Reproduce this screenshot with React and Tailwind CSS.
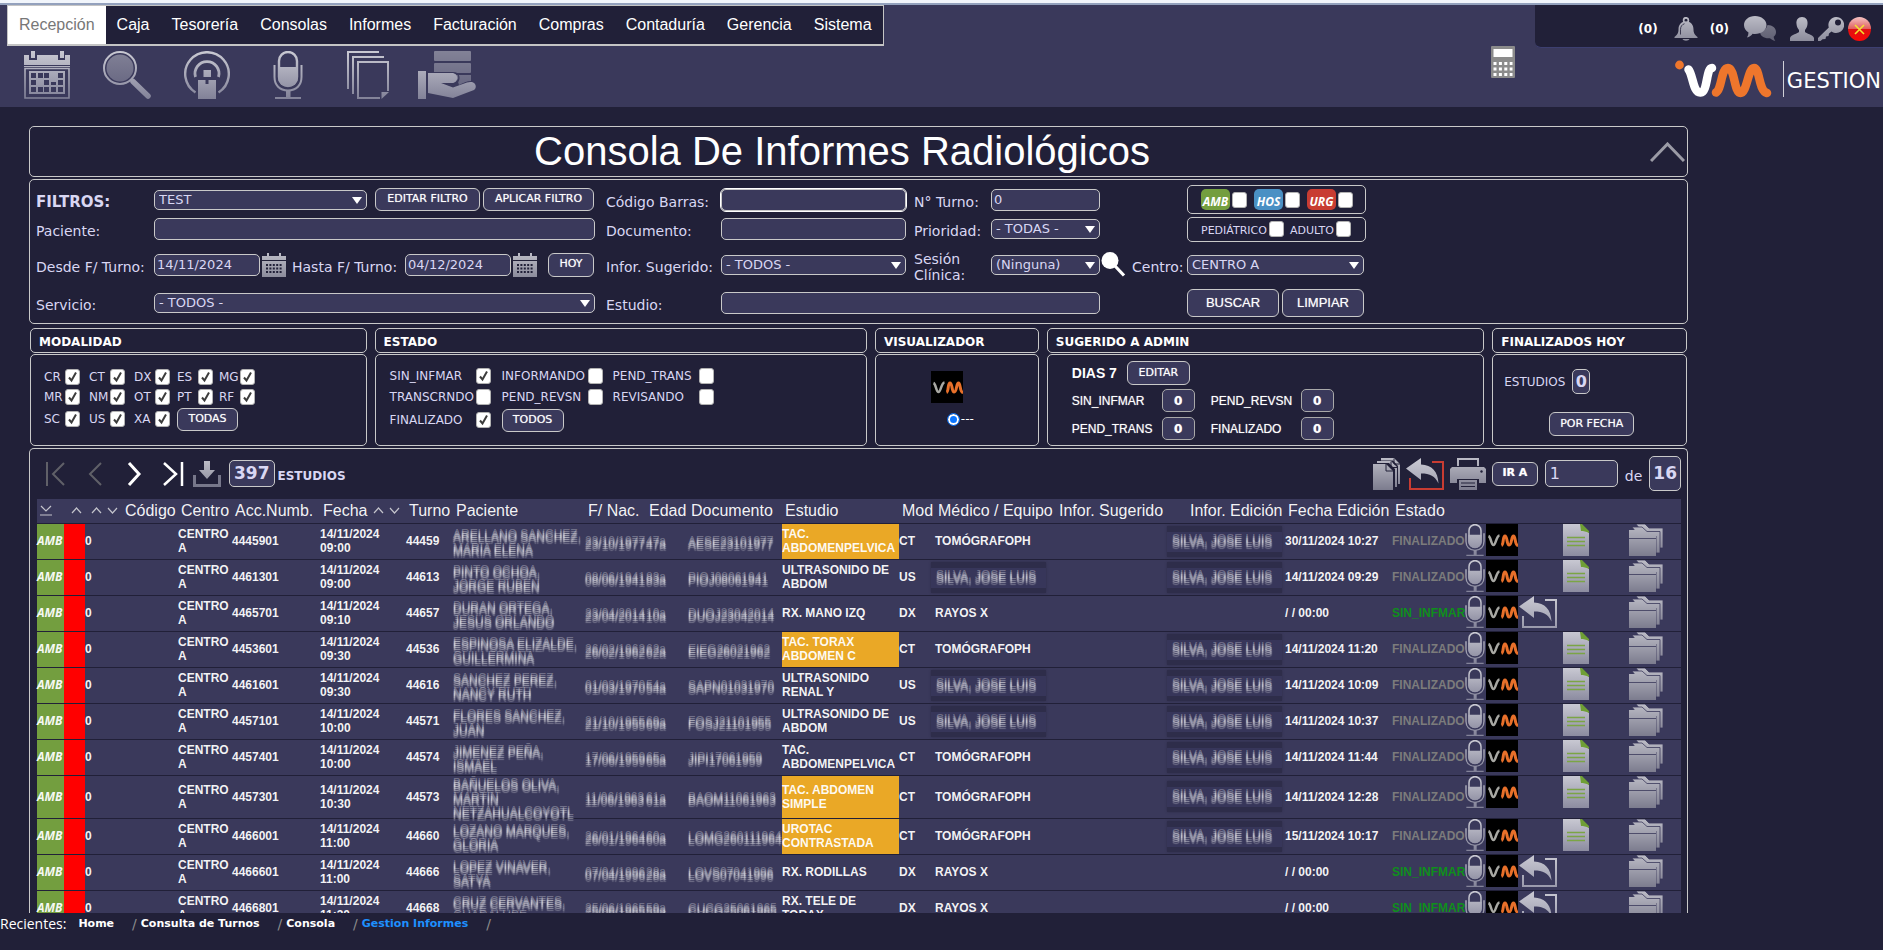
import React, { useState } from 'react';
import clsx from 'clsx';

const MENU = ['Recepción', 'Caja', 'Tesorería', 'Consolas', 'Informes', 'Facturación', 'Compras', 'Contaduría', 'Gerencia', 'Sistema'];

const MODALITIES = ['CR', 'CT', 'DX', 'ES', 'MG', 'MR', 'NM', 'OT', 'PT', 'RF', 'SC', 'US', 'XA'];

const STATES = [
  { name: 'SIN_INFMAR', on: true },
  { name: 'INFORMANDO', on: false },
  { name: 'PEND_TRANS', on: false },
  { name: 'TRANSCRNDO', on: false },
  { name: 'PEND_REVSN', on: false },
  { name: 'REVISANDO', on: false },
  { name: 'FINALIZADO', on: true },
];

const ROWS = [
  { acc: '4445901', hora: '09:00', turno: '44459', pac: 'ARELLANO SANCHEZ,\nMARIA ELENA', nac: '23/10/1977', edad: '47a', doc: 'AESE23101977', est: 'TAC. ABDOMENPELVICA', hot: true, mod: 'CT', med: 'TOMÓGRAFOPH', inf: 'SILVA, JOSE LUIS', edic: '30/11/2024 10:27', fin: true },
  { acc: '4461301', hora: '09:00', turno: '44613', pac: 'PINTO OCHOA,\nJORGE RUBEN', nac: '08/06/1941', edad: '83a', doc: 'PIOJ08061941', est: 'ULTRASONIDO DE ABDOM', mod: 'US', med: '', inf: 'SILVA, JOSE LUIS', edic: '14/11/2024 09:29', fin: true },
  { acc: '4465701', hora: '09:10', turno: '44657', pac: 'DURAN ORTEGA,\nJESUS ORLANDO', nac: '23/04/2014', edad: '10a', doc: 'DUOJ23042014', est: 'RX. MANO IZQ', mod: 'DX', med: 'RAYOS X', inf: '', edic: '/ / 00:00', fin: false },
  { acc: '4453601', hora: '09:30', turno: '44536', pac: 'ESPINOSA ELIZALDE,\nGUILLERMINA', nac: '26/02/1962', edad: '62a', doc: 'EIEG26021962', est: 'TAC. TORAX ABDOMEN C', hot: true, mod: 'CT', med: 'TOMÓGRAFOPH', inf: 'SILVA, JOSE LUIS', edic: '14/11/2024 11:20', fin: true },
  { acc: '4461601', hora: '09:30', turno: '44616', pac: 'SANCHEZ PEREZ,\nNANCY RUTH', nac: '01/03/1970', edad: '54a', doc: 'SAPN01031970', est: 'ULTRASONIDO RENAL Y', mod: 'US', med: '', inf: 'SILVA, JOSE LUIS', edic: '14/11/2024 10:09', fin: true },
  { acc: '4457101', hora: '10:00', turno: '44571', pac: 'FLORES SANCHEZ,\nJUAN', nac: '21/10/1955', edad: '69a', doc: 'FOSJ21101955', est: 'ULTRASONIDO DE ABDOM', mod: 'US', med: '', inf: 'SILVA, JOSE LUIS', edic: '14/11/2024 10:37', fin: true },
  { acc: '4457401', hora: '10:00', turno: '44574', pac: 'JIMENEZ PEÑA,\nISMAEL', nac: '17/06/1959', edad: '65a', doc: 'JIPI17061959', est: 'TAC. ABDOMENPELVICA', mod: 'CT', med: 'TOMÓGRAFOPH', inf: 'SILVA, JOSE LUIS', edic: '14/11/2024 11:44', fin: true },
  { acc: '4457301', hora: '10:30', turno: '44573', pac: 'BAÑUELOS OLIVA,\nMARTIN\nNETZAHUALCOYOTL', nac: '11/06/1963', edad: '61a', doc: 'BAOM11061963', est: 'TAC. ABDOMEN SIMPLE', hot: true, mod: 'CT', med: 'TOMÓGRAFOPH', inf: 'SILVA, JOSE LUIS', edic: '14/11/2024 12:28', fin: true },
  { acc: '4466001', hora: '11:00', turno: '44660', pac: 'LOZANO MARQUES,\nGLORIA', nac: '26/01/1964', edad: '60a', doc: 'LOMG260111964', est: 'UROTAC CONTRASTADA', hot: true, mod: 'CT', med: 'TOMÓGRAFOPH', inf: 'SILVA, JOSE LUIS', edic: '15/11/2024 10:17', fin: true },
  { acc: '4466601', hora: '11:00', turno: '44666', pac: 'LOPEZ VINAVER,\nSATYA', nac: '07/04/1996', edad: '28a', doc: 'LOVS07041996', est: 'RX. RODILLAS', mod: 'DX', med: 'RAYOS X', inf: '', edic: '/ / 00:00', fin: false },
  { acc: '4466801', hora: '11:30', turno: '44668', pac: 'CRUZ CERVANTES,\nGUADALUPE', nac: '25/06/1965', edad: '59a', doc: 'CUCG25061965', est: 'RX. TELE DE TORAX', mod: 'DX', med: 'RAYOS X', inf: '', edic: '/ / 00:00', fin: false },
];

// metal gradients shared by every icon, one per icon height
const Gradients = () => (
  <svg className="absolute h-0 w-0" aria-hidden="true">
    <defs>
      <linearGradient id="metal48" gradientUnits="userSpaceOnUse" x1="0" y1="0" x2="0" y2="48">
        <stop offset="0" stopColor="#cacad3" />
        <stop offset="1" stopColor="#828298" />
      </linearGradient>
      <linearGradient id="metal32" gradientUnits="userSpaceOnUse" x1="0" y1="0" x2="0" y2="32">
        <stop offset="0" stopColor="#bcbcc6" />
        <stop offset="1" stopColor="#7c7c8e" />
      </linearGradient>
      <linearGradient id="paper" gradientUnits="userSpaceOnUse" x1="0" y1="0" x2="0" y2="32">
        <stop offset="0" stopColor="#c8c8d2" />
        <stop offset="1" stopColor="#8c8ca0" />
      </linearGradient>
      <linearGradient id="red" gradientUnits="userSpaceOnUse" x1="0" y1="0" x2="0" y2="24">
        <stop offset="0" stopColor="#f6c3c3" />
        <stop offset="0.48" stopColor="#e06060" />
        <stop offset="0.52" stopColor="#e01010" />
        <stop offset="1" stopColor="#f80808" />
      </linearGradient>
    </defs>
  </svg>
);

const M48 = 'url(#metal48)';
const M32 = 'url(#metal32)';

const CalendarIcon = () => (
  <svg width="46" height="48" viewBox="0 0 46 48">
    <path fill={M48} d="M0 4h5v5h8V4h21v5h7V4h5v10H0z" />
    <path fill={M48} d="M7 0h4v7H7zM36 0h4v7h-4zM0 15h46v1H0z" />
    <path fill="none" stroke={M48} strokeWidth="1.6" d="M1 17.5h44V47H1z" />
    <path fill={M48} fillRule="evenodd" d="M5 20h36v23H5zM7 22v5h5v-5zM14 22v5h5v-5zM20 22v5h5v-5zM34 22v5h5v-5zM7 29v5h5v-5zM20 29v5h5v-5zM27 31v3h5v-3zM34 29v5h5v-5zM7 36v5h5v-5zM14 36v5h5v-5zM20 36v5h5v-5zM27 36v5h5v-5zM34 36v5h5v-5z" />
  </svg>
);

const SearchIcon = () => (
  <svg width="48" height="48" viewBox="0 0 48 48">
    <circle cx="17" cy="17" r="16" fill="none" stroke={M48} strokeWidth="2" />
    <circle cx="17" cy="17" r="13.5" fill={M48} opacity="0.5" />
    <path stroke={M48} strokeWidth="5.5" strokeLinecap="round" d="M30 30.5L45 45" />
  </svg>
);

const PodcastIcon = () => (
  <svg width="46" height="48" viewBox="0 0 46 48">
    <path fill="none" stroke={M48} strokeWidth="2.4" d="M11.5 41.5A21.8 21.8 0 1 1 34.5 41.5" />
    <path fill="none" stroke={M48} strokeWidth="2.8" d="M11.5 26A12 12 0 1 1 34.5 26" />
    <path fill={M48} d="M19.5 19h7.5v7h-7.5zM14 29h7.5v4h3v-4H32v19H14z" />
  </svg>
);

const MicIcon = ({ small = false }) => (
  <svg width={small ? 20 : 30} height={small ? 32 : 48} viewBox="0 0 30 48" className="shrink-0">
    <rect x="6" y="1" width="18" height="34" rx="9" fill="none" stroke={M48} strokeWidth="2.4" />
    <path fill={M48} d="M5 16h20v11a10 9 0 0 1-20 0z" />
    <path fill="none" stroke={M48} strokeWidth="2" d="M1.5 14v12c0 8 5 13.5 13.5 13.5S28.5 34 28.5 26V14" />
    <path fill={M48} d="M13 39h4.5v7H28v2H2v-2h11z" />
  </svg>
);

const PagesIcon = () => (
  <svg width="42" height="48" viewBox="0 0 42 48">
    <path fill="none" stroke={M48} strokeWidth="2" d="M1 38V1h31M6 43V6h31" />
    <path fill="none" stroke={M48} strokeWidth="2" d="M33 47H11V11h30v29" />
    <path fill={M48} d="M34.5 41H42l-7.5 7z" />
  </svg>
);

const HandIcon = () => (
  <svg width="58" height="48" viewBox="0 0 58 48">
    <g fill={M48} opacity="0.5">
      <rect x="16" y="0" width="37" height="10" rx="1" />
      <rect x="16" y="12" width="37" height="10" rx="1" />
      <path d="M38 24h15v6c-4 0-8 2-12 4z" />
    </g>
    <path fill={M48} d="M0 20h8v28H0z" />
    <path fill={M48} d="M10 22h24c7 0 7 10 0 10H23l12 4.5 14-5c8-2.5 11 4 7 7.5L35 47 10 42z" />
    <path fill="none" stroke="#3a395b" strokeWidth="1.2" d="M10 21.5h25c7 0 7 7 4 10" />
  </svg>
);

const CalculatorIcon = () => (
  <svg width="24" height="32" viewBox="0 0 24 32">
    <rect width="24" height="32" rx="1" fill="#8b8b8b" />
    <rect x="2.5" y="3" width="19" height="8" fill="#fff" />
    <path stroke="#fff" strokeWidth="3" strokeDasharray="3 2.4" d="M2.5 17.5h19M2.5 23h19M2.5 28.5h19" />
  </svg>
);

const BellIcon = () => (
  <svg width="24" height="24" viewBox="0 0 24 24">
    <circle cx="12" cy="3.2" r="2.4" fill="none" stroke={M32} strokeWidth="1.7" />
    <path fill={M32} d="M12 4.5c5 0 7.5 3.5 7.5 8 0 4 1.5 5.5 4 7.5v1H.5v-1c2.5-2 4-3.5 4-7.5 0-4.5 2.5-8 7.5-8zM8.5 22h7c-1 2.2-6 2.2-7 0z" />
    <path fill="none" stroke="#212038" strokeWidth="0.8" d="M6.5 17.5v-5c0-3 1.5-5 4-5.8" />
  </svg>
);

const ChatIcon = () => (
  <svg width="34" height="26" viewBox="0 0 34 26">
    <path fill={M32} opacity="0.6" d="M23.5 9c5 0 8.5 3 8.5 7 0 2-.8 3.5-2.3 4.8.1 1.7.8 3 1.6 4.2-2.5-.5-4.3-1.6-5.3-2.7-6 .5-9.5-2.3-10-6C20 15 22.5 12.5 23.5 9z" />
    <path fill={M32} d="M11 0c6.5 0 11.5 4 11.5 9S17.5 18 11 18c-.8 0-1.6 0-2.4-.2C7.5 19.5 5.5 21 3 21.5c1-1.7 1.5-3.4 1.5-5C1.7 14.7 0 12 0 9c0-5 4.5-9 11-9z" />
  </svg>
);

const UserIcon = () => (
  <svg width="24" height="24" viewBox="0 0 24 24">
    <path fill={M32} d="M12 0c4 0 6 3 5.5 7-.3 3-1.2 4.5-2.5 6v2c1 1.5 8 2.5 9 6v3H0v-3c1-3.5 8-4.5 9-6v-2C7.7 11.5 6.8 10 6.5 7 6 3 8 0 12 0z" />
  </svg>
);

const KeyIcon = () => (
  <svg width="26" height="24" viewBox="0 0 26 24">
    <path fill={M32} fillRule="evenodd" d="M18 0a8 8 0 1 1-4.5 14.5L11 16.5 10.5 19 8 19.5 7.5 22l-3 .2L2.5 24H0v-3L10.8 10.5A8 8 0 0 1 18 0zM20 2.5a3 3 0 1 0 .01 6 3 3 0 0 0 0-6z" />
  </svg>
);

const CloseIcon = () => (
  <svg width="23" height="24" viewBox="0 0 23 24">
    <ellipse cx="11.5" cy="12" rx="11.5" ry="12" fill="url(#red)" />
    <path stroke="#f3e230" strokeWidth="1.6" d="M7 8l9 9M16 8l-9 9" />
  </svg>
);

const BrandMark = () => (
  <svg width="98" height="38" viewBox="0 0 98 38">
    <circle cx="4.5" cy="5" r="4.4" fill="#ee762c" />
    <path fill="none" stroke="#fff" strokeWidth="8.5" strokeLinecap="round" strokeLinejoin="round" d="M13.5 9.5C18 15 18 33 25.5 32.5 33 32 31 8 37 8" />
    <path fill="none" stroke="#ee762c" strokeWidth="8.5" strokeLinecap="round" strokeLinejoin="round" d="M41 32.5C47 29 46 8 53 8s6 25 12.5 25S73 8 79 8c6 0 4.5 23 13 25" />
  </svg>
);

const ViewerTile = () => (
  <svg width="32" height="32" viewBox="0 0 32 32" className="shrink-0">
    <path fill="#000" d="M0 0h32v32H0z" />
    <path fill="none" stroke="#a9a9a4" strokeWidth="2.5" d="M2.5 12c2.5 1 2.5 9 5 9s2.5-9 6-9.5" />
    <path fill="none" stroke="#e8702a" strokeWidth="3" d="M15.5 21.5c2.5-1 1-9.5 3.5-9.5s1.5 9 4.2 9 2-9 4.3-9 1 9 4.5 9.5" />
  </svg>
);

const ReplyIcon = ({ box = M48 }) => (
  <svg width="38" height="32" viewBox="0 0 38 32">
    <path fill="none" stroke={box} strokeWidth="2" d="M4 20v11h33V4H26" />
    <path fill={M48} d="M0 10.5L15 0v6.5c11 .5 17 7 17.5 19C29 18 24 15.5 15 15.5V22z" />
  </svg>
);

const FilesIcon = () => (
  <svg width="28" height="32" viewBox="0 0 28 32">
    <path fill={M32} d="M8 0h13l6 6v20h-2V8l-5-5.5H8zM4 3h14l6 6v20h-2V11l-6-6H4z" />
    <path fill={M32} d="M0 6h13l7 7v19H0z" />
    <path fill="none" stroke="#212038" d="M13 6v7h7M18 3.5v6h6M21 .5v5.5h6" />
  </svg>
);

const PrinterIcon = () => (
  <svg width="36" height="32" viewBox="0 0 36 32">
    <path fill="none" stroke={M32} strokeWidth="2" d="M8 8V1h20v7" />
    <path fill={M32} d="M2 9h32l2 2v14h-7v-4H7v4H0V11zM9 22h18v10H9z" />
    <path fill="none" stroke="#212038" strokeWidth="1.2" d="M11 25h14M11 28.5h14" />
    <circle cx="31.5" cy="13.5" r="1.2" fill="#212038" />
  </svg>
);

const ReportIcon = () => (
  <svg width="26" height="32" viewBox="0 0 26 32">
    <path fill="url(#paper)" d="M0 0h17l9 9v23H0z" />
    <path fill="#6f9f35" d="M17 0h2l7 7v2c-3-1.5-5.5-2-8-2z" />
    <path stroke="#7ba545" strokeWidth="1.4" d="M4 13.5h18M4 17.5h18M4 21.5h18" />
  </svg>
);

const FoldersIcon = () => (
  <svg width="34" height="32" viewBox="0 0 34 32">
    <path fill={M32} stroke="#3a395b" strokeWidth="0.8" d="M7 0h9l4 4h14v20h-4V9H14z" />
    <path fill={M32} stroke="#3a395b" strokeWidth="0.8" d="M3 3h10l5 4.5h13V29h-4V12H10z" />
    <path fill={M32} d="M0 6h10l5 5h12v21H0z" />
    <path stroke="#3a395b" strokeWidth="0.8" d="M0 14.5h27" />
  </svg>
);

const DownloadIcon = () => (
  <svg width="28" height="26" viewBox="0 0 28 26">
    <path fill={M32} d="M11 0h6v9h5l-8 9-8-9h5z" />
    <path fill="none" stroke="#77778a" strokeWidth="3" d="M1.5 14v10.5h25V14" />
  </svg>
);

const MiniCalendar = () => (
  <svg width="24" height="24" viewBox="0 0 24 24">
    <path fill={M32} d="M0 3h24v4H0zM0 8h24v16H0zM5 0h2v5H5zM17 0h2v5h-2z" />
    <path stroke="#212038" strokeWidth="2" strokeDasharray="2 1.4" d="M4 12h16M4 15.5h16M4 19h16" />
  </svg>
);

const Lens = () => (
  <svg width="25" height="25" viewBox="0 0 25 25">
    <circle cx="9" cy="8.5" r="8.5" fill="#fff" />
    <path stroke="#fff" strokeWidth="3.2" d="M14 14l9 9.5" />
  </svg>
);

// thin arrows of the pager and of the column sorting
const Stroke = ({ w, h, d, color = '#fff', width = 2.5 }) => (
  <svg width={w} height={h} viewBox={`0 0 ${w} ${h}`} className="shrink-0">
    <path fill="none" stroke={color} strokeWidth={width} d={d} />
  </svg>
);

const SortUp = () => <Stroke w={11} h={7} d="M1 6l4.5-5L10 6" color="#c4c4cc" width={1.2} />;
const SortDown = () => <Stroke w={11} h={7} d="M1 1l4.5 5L10 1" color="#c4c4cc" width={1.2} />;

const field = 'rounded-[5px] border border-[#c9c9c9] bg-[#3a395b] text-[#d9d7f3]';

const Select = ({ id, label, value, className }) => (
  <div className={clsx('relative', className)}>
    <select id={id} aria-label={label} defaultValue={value} className={clsx(field, 'block h-5 w-full appearance-none px-1 text-[13px] leading-4')}>
      <option>{value}</option>
    </select>
    <svg width="10" height="7" viewBox="0 0 10 7" className="pointer-events-none absolute top-[7px] right-[5px]">
      <path fill="#fff" d="M0 0h10L5 7z" />
    </svg>
  </div>
);

const Input = ({ className, ...rest }) => (
  <input type="text" className={clsx(field, 'block h-[22px] px-[2px] text-[13px] leading-4', className)} {...rest} />
);

const Button = ({ className, children }) => (
  <button type="button" className={clsx('shrink-0 rounded-[6px] border border-[#c9c9c9] bg-[#3a395b] text-white [text-shadow:0_0_1px_rgba(255,255,255,0.6)]', className)}>
    {children}
  </button>
);

const Check = ({ id, checked = false, label }) => {
  const [on, setOn] = useState(checked);
  return (
    <span className="relative block h-4 w-[15px] shrink-0">
      <input
        id={id}
        type="checkbox"
        aria-label={label}
        checked={on}
        onChange={() => setOn(!on)}
        className="block h-4 w-[15px] appearance-none rounded-[3px] border border-[#b2b2b2] bg-white"
      />
      {on && (
        <svg width="15" height="16" viewBox="0 0 15 16" className="pointer-events-none absolute inset-0">
          <path fill="none" stroke="#3c3c3c" strokeWidth="2" d="M4 8.5l2.5 3 4.5-8" />
        </svg>
      )}
    </span>
  );
};

const Label = ({ htmlFor, children, className }) => (
  <label htmlFor={htmlFor} className={clsx('pt-1 leading-4 text-[#d9d7f3]', className || 'text-sm')}>{children}</label>
);

const Panel = ({ title, children }) => (
  <section className="flex flex-col gap-px">
    <h2 className="h-[25px] rounded-[5px] border border-[#c9c9c9] px-2 pt-[3px] text-xs leading-5 font-bold text-white">{title}</h2>
    <div className="h-[92px] rounded-[5px] border border-[#c9c9c9]">{children}</div>
  </section>
);

const Header = () => (
  <header className="flex h-[102px] items-start justify-between bg-[#3a395b] font-['Liberation_Sans',Arial,sans-serif]">
    <div>
      <nav className="ml-[7px] flex h-[41px] border border-b-2 border-[#c4c4c4] bg-[#212038]">
        {MENU.map((item, i) => (
          <a key={item} href="#" className={clsx('flex items-center px-[11px] text-base', i === 0 ? 'bg-white text-[#777]' : 'text-white')}>
            {item}
          </a>
        ))}
      </nav>
      <div className="mt-[5px] ml-6 flex">
        <a href="#" aria-label="Turnos" className="mr-[33px]"><CalendarIcon /></a>
        <a href="#" aria-label="Buscar" className="mr-[33px]"><SearchIcon /></a>
        <a href="#" aria-label="Llamador" className="mr-[43px]"><PodcastIcon /></a>
        <a href="#" aria-label="Dictado" className="mr-11"><MicIcon /></a>
        <a href="#" aria-label="Informes" className="mr-[29px]"><PagesIcon /></a>
        <a href="#" aria-label="Entregas"><HandIcon /></a>
      </div>
    </div>
    <div className="flex items-start">
      <button type="button" aria-label="Calculadora" className="mt-[41px] mr-5"><CalculatorIcon /></button>
      <div className="w-[348px]">
        <div className="flex h-[43px] items-center justify-end rounded-bl-[6px] border-b border-[#3d3f70] bg-[#212038] pt-[5px] pr-3 font-['DejaVu_Sans',Verdana,sans-serif] text-xs font-bold text-white">
          <span className="mr-4">(0)</span>
          <BellIcon />
          <span className="mr-[15px] ml-3">(0)</span>
          <ChatIcon />
          <span className="ml-3 flex items-center gap-1">
            <UserIcon />
            <KeyIcon />
            <CloseIcon />
          </span>
        </div>
        <div className="mt-3 flex items-center justify-end pr-[2px]">
          <BrandMark />
          <span className="ml-[10px] border-l border-[#d0d0d8] pt-1 pl-[3px] font-['DejaVu_Sans',Verdana,sans-serif] text-[21px] leading-8 text-white">GESTION</span>
        </div>
      </div>
    </div>
  </header>
);

const kinds = [
  { name: 'AMB', color: 'bg-[#739e3f]' },
  { name: 'HOS', color: 'bg-[#4a90c4]' },
  { name: 'URG', color: 'bg-[#c83c32]' },
];

const Filters = () => (
  <section className="mt-[2px] grid grid-cols-[118px_452px_115px_193px_77px_141px_55px_1fr] grid-rows-[29px_30px_41px_35px] items-center rounded-[5px] border border-[#c9c9c9] pt-[5px] pb-[3px] pl-[6px]">
    <Label htmlFor="filtro" className="text-[15px] font-bold">FILTROS:</Label>
    <div className="flex items-center">
      <Select id="filtro" value="TEST" className="mr-2 w-[213px]" />
      <Button className="mr-[3px] h-[23px] w-[105px] text-[11px]">EDITAR FILTRO</Button>
      <Button className="h-[23px] w-[111px] text-[11px]">APLICAR FILTRO</Button>
    </div>
    <Label htmlFor="codigo">Código Barras:</Label>
    <Input id="codigo" className="w-[185px] border-[#101010] outline outline-white" />
    <Label htmlFor="nturno">N° Turno:</Label>
    <Input id="nturno" defaultValue="0" className="w-[109px]" />
    <span />
    <div className="flex h-[29px] w-[179px] items-center gap-[7px] rounded-[5px] border border-[#c9c9c9] pl-[13px]">
      {kinds.map((k) => (
        <label key={k.name} className="flex items-center gap-[2px]">
          <span className={clsx("w-[29px] rounded-[5px] pt-1 text-center font-['Open_Sans',Tahoma,sans-serif] text-xs leading-[17px] font-bold text-white italic", k.color)}>{k.name}</span>
          <Check />
        </label>
      ))}
    </div>

    <Label htmlFor="paciente">Paciente:</Label>
    <Input id="paciente" className="w-[441px]" />
    <Label htmlFor="documento">Documento:</Label>
    <Input id="documento" className="w-[185px]" />
    <Label htmlFor="prioridad">Prioridad:</Label>
    <Select id="prioridad" value="- TODAS -" className="w-[109px]" />
    <span />
    <div className="flex h-[25px] w-[179px] items-center rounded-[5px] border border-[#c9c9c9] pl-[13px] text-[11px] text-[#d9d7f3]">
      <label className="mr-[6px] flex items-center gap-[2px]"><span className="pt-[5px]">PEDIÁTRICO</span><Check /></label>
      <label className="flex items-center gap-[2px]"><span className="pt-[5px]">ADULTO</span><Check /></label>
    </div>

    <Label htmlFor="desde">Desde F/ Turno:</Label>
    <div className="flex items-center">
      <Input id="desde" defaultValue="14/11/2024" className="w-[106px]" />
      <button type="button" aria-label="Elegir fecha desde" className="mx-[2px]"><MiniCalendar /></button>
      <Label htmlFor="hasta" className="ml-1 w-[113px] text-sm whitespace-nowrap">Hasta F/ Turno:</Label>
      <Input id="hasta" defaultValue="04/12/2024" className="w-[106px]" />
      <button type="button" aria-label="Elegir fecha hasta" className="mr-[11px] ml-[2px]"><MiniCalendar /></button>
      <Button className="h-6 w-[46px] text-[11px]">HOY</Button>
    </div>
    <Label htmlFor="sugerido">Infor. Sugerido:</Label>
    <Select id="sugerido" value="- TODOS -" className="w-[185px]" />
    <Label htmlFor="sesion">Sesión Clínica:</Label>
    <div className="flex items-center gap-px">
      <Select id="sesion" value="(Ninguna)" className="w-[109px]" />
      <button type="button" aria-label="Buscar sesión"><Lens /></button>
    </div>
    <Label htmlFor="centro">Centro:</Label>
    <Select id="centro" value="CENTRO A" className="w-[177px]" />

    <Label htmlFor="servicio">Servicio:</Label>
    <Select id="servicio" value="- TODOS -" className="w-[441px]" />
    <Label htmlFor="estudio">Estudio:</Label>
    <Input id="estudio" className="col-span-3 w-[379px]" />
    <span />
    <div className="flex gap-[3px] font-['Liberation_Sans',Arial,sans-serif] text-[13px]">
      <Button className="h-7 w-[92px]">BUSCAR</Button>
      <Button className="h-7 w-[82px]">LIMPIAR</Button>
    </div>
  </section>
);

const Counter = ({ label }) => (
  <div className="flex items-center">
    <span className="flex-1">{label}</span>
    <span className="flex h-[23px] w-[33px] items-center justify-center rounded-[5px] border border-[#a9a9a9] bg-[#3a395b] font-['DejaVu_Sans',Verdana,sans-serif] font-bold">0</span>
  </div>
);

const Summary = () => (
  <div className="mx-px mt-1 grid grid-cols-[337fr_493fr_164fr_438fr_195fr] gap-2">
    <Panel title="MODALIDAD">
      <div className="grid grid-cols-[45px_45px_43px_42px_45px] grid-rows-[20px_20px_24px] items-center pt-3 pl-[13px] text-xs text-[#d9d7f3]">
        {MODALITIES.map((m) => (
          <label key={m} className="flex items-center">
            <span className="w-[21px]">{m}</span>
            <Check checked />
          </label>
        ))}
        <Button className="h-[23px] w-[61px] text-[11px]">TODAS</Button>
      </div>
    </Panel>
    <Panel title="ESTADO">
      <div className="grid grid-cols-[112px_111px_110px] grid-rows-[20px_21px_26px] items-center pt-[11px] pl-[14px] text-xs text-[#d9d7f3]">
        {STATES.map((s) => (
          <label key={s.name} className="flex items-center">
            <span className="w-[86px]">{s.name}</span>
            <Check checked={s.on} />
          </label>
        ))}
        <Button className="h-[23px] w-[62px] text-[11px]">TODOS</Button>
      </div>
    </Panel>
    <Panel title="VISUALIZADOR">
      <div className="flex flex-col items-center gap-2 pt-4 pr-5">
        <ViewerTile />
        <label className="flex items-center text-xs text-white">
          <input type="radio" name="visor" defaultChecked className="ml-7 h-[11px] w-[11px] appearance-none rounded-full border-2 border-white bg-[#0a75ff] outline outline-[#0a75ff]" />
          <span className="ml-[2px]">---</span>
        </label>
      </div>
    </Panel>
    <Panel title="SUGERIDO A ADMIN">
      <div className="pt-[6px] pl-6 font-['Liberation_Sans',Arial,sans-serif] text-xs text-white">
        <div className="mb-1 flex items-center text-sm font-bold">
          <span className="mr-[10px]">DIAS 7</span>
          <Button className="h-6 w-[63px] font-['DejaVu_Sans',Verdana,sans-serif] text-[11px] font-normal">EDITAR</Button>
        </div>
        <div className="grid grid-cols-[123px_123px] gap-x-4 gap-y-[5px] [text-shadow:0_0_1px_rgba(255,255,255,0.6)]">
          <Counter label="SIN_INFMAR" />
          <Counter label="PEND_REVSN" />
          <Counter label="PEND_TRANS" />
          <Counter label="FINALIZADO" />
        </div>
      </div>
    </Panel>
    <Panel title="FINALIZADOS HOY">
      <div className="flex flex-col pt-[14px] pl-[11px] text-xs text-[#d9d7f3]">
        <div className="flex items-center gap-[7px]">
          ESTUDIOS
          <span className="flex h-[25px] w-[18px] items-center justify-center rounded-[5px] border border-[#c9c9c9] bg-[#3a395b] text-base font-bold">0</span>
        </div>
        <Button className="mt-[18px] ml-[45px] h-6 w-[85px] text-[11px]">POR FECHA</Button>
      </div>
    </Panel>
  </div>
);

const Toolbar = () => (
  <div className="flex h-[50px] items-center justify-between pb-px text-[#d9d7f3]">
    <div className="flex items-center">
      <button type="button" aria-label="Primera" className="ml-2"><Stroke w={21} h={24} d="M2 0v24M19 1L8 12l11 11" color="#606068" width={2} /></button>
      <button type="button" aria-label="Anterior" className="ml-[22px]"><Stroke w={15} h={24} d="M13 1L2 12l11 11" color="#606068" width={2} /></button>
      <button type="button" aria-label="Siguiente" className="ml-6"><Stroke w={15} h={24} d="M2 1l10 11L2 23" width={3} /></button>
      <button type="button" aria-label="Última" className="ml-[21px]"><Stroke w={21} h={24} d="M1 1l12 11L1 23M19 0v24" /></button>
      <button type="button" aria-label="Descargar" className="ml-[9px]"><DownloadIcon /></button>
      <span className="ml-2 rounded-[5px] border border-[#c9c9c9] bg-[#3a395b] px-1 text-[17px] leading-[25px] font-bold">397</span>
      <span className="ml-[3px] pt-1 text-xs font-bold">ESTUDIOS</span>
    </div>
    <div className="flex items-center">
      <button type="button" aria-label="Copiar"><FilesIcon /></button>
      <button type="button" aria-label="Devolver" className="ml-[5px]"><ReplyIcon box="#c83c32" /></button>
      <button type="button" aria-label="Imprimir" className="ml-[6px]"><PrinterIcon /></button>
      <Button className="ml-[6px] h-6 w-[46px] text-[11px] font-bold">IR A</Button>
      <input aria-label="Página" defaultValue="1" className={clsx(field, 'ml-[7px] h-[27px] w-[73px] px-1 text-base')} />
      <span className="mx-[7px] pt-1 text-sm">de</span>
      <span className="rounded-[5px] border border-[#c9c9c9] bg-[#3a395b] px-[3px] text-[17px] leading-[33px] font-bold">16</span>
    </div>
  </div>
);

const smear = 'text-white/30 [text-shadow:0_2px_1px_rgba(255,255,255,0.4),0_4px_1px_rgba(255,255,255,0.5),0_6px_1px_rgba(255,255,255,0.3)]';

const Smudge = () => (
  <div className="h-[31px] w-[115px] bg-[#2e2d4a] py-[6px] shadow-[0_0_2px_#2e2d4a]">
    <div className={clsx('h-5 bg-[#37365a] pl-[5px] leading-[14px] font-normal whitespace-nowrap', smear)}>SILVA, JOSE LUIS</div>
  </div>
);

const COLS = [27, 21, 37, 56, 54, 88, 86, 47, 132, 61, 42, 94, 117, 36, 121, 109, 120, 107, 73, 21, 33, 44, 66, 52];

const Studies = () => (
  <table className="w-full table-fixed border-collapse bg-[#3a395b] font-['Liberation_Sans',Arial,sans-serif] text-xs leading-[14px] font-bold text-white/95">
    <colgroup>
      {COLS.map((w, i) => <col key={i} style={{ width: w }} />)}
    </colgroup>
    <thead>
      <tr className="h-6 border-b border-[#212038] text-left text-base leading-5 whitespace-nowrap *:p-0 *:pl-[3px] *:font-normal">
        <th aria-label="Todos"><Stroke w={12} h={11} d="M1 1l5 5 5-5M0 10h12" color="#c4c4cc" width={1.2} /></th>
        <th aria-label="Prioridad"><span className="flex justify-center"><SortUp /></span></th>
        <th aria-label="Orden"><span className="flex gap-[5px] pl-[3px]"><SortUp /><SortDown /></span></th>
        <th>Código</th>
        <th>Centro</th>
        <th>Acc.Numb.</th>
        <th><span className="flex items-center">Fecha<span className="ml-[6px] flex gap-[5px]"><SortUp /><SortDown /></span></span></th>
        <th>Turno</th>
        <th>Paciente</th>
        <th>F/ Nac.</th>
        <th>Edad</th>
        <th>Documento</th>
        <th>Estudio</th>
        <th>Mod</th>
        <th>Médico / Equipo</th>
        <th>Infor. Sugerido</th>
        <th><span className="pl-[22px]">Infor. Edición</span></th>
        <th>Fecha Edición</th>
        <th>Estado</th>
        <th colSpan={5} aria-label="Acciones" />
      </tr>
    </thead>
    <tbody>
      {ROWS.map((r) => (
        <tr key={r.acc} className="h-9 border-b border-[#212038] *:p-0">
          <td className="bg-[#739e3f] font-['Open_Sans',Tahoma,sans-serif] italic">AMB</td>
          <td className="bg-[#ff0000]" />
          <td>0</td>
          <td />
          <td>CENTRO A</td>
          <td>{r.acc}</td>
          <td><div className="w-16">14/11/2024 {r.hora}</div></td>
          <td>{r.turno}</td>
          <td className={clsx('font-normal whitespace-pre', smear)}>{r.pac}</td>
          <td className={clsx('font-normal', smear)}>{r.nac}</td>
          <td className={clsx('font-normal', smear)}>{r.edad}</td>
          <td className={clsx('font-normal whitespace-nowrap', smear)}>{r.doc}</td>
          <td className={clsx(r.hot && 'bg-[#eaa826]')}>{r.est}</td>
          <td>{r.mod}</td>
          <td>{r.med || <div className="-ml-1"><Smudge /></div>}</td>
          <td />
          <td>{r.inf && <div className="pl-[2px]"><Smudge /></div>}</td>
          <td className="whitespace-nowrap">{r.edic}</td>
          <td className={r.fin ? 'text-[#7c7c7c]' : 'text-[#0f8f1c]'}>{r.fin ? 'FINALIZADO' : 'SIN_INFMAR'}</td>
          <td className="align-top"><MicIcon small /></td>
          <td className="align-top"><ViewerTile /></td>
          <td className="align-top">{!r.fin && <ReplyIcon />}</td>
          <td className="align-top">{r.fin && <ReportIcon />}</td>
          <td className="align-top"><FoldersIcon /></td>
        </tr>
      ))}
    </tbody>
  </table>
);

const RECENT = ['Home', 'Consulta de Turnos', 'Consola', 'Gestion Informes'];

const App = () => (
  <div className="flex h-screen flex-col overflow-hidden bg-[#212038] font-['DejaVu_Sans',Verdana,sans-serif]">
    <Gradients />
    <div className="h-[5px] shrink-0 border-b-2 border-[#93a1bd] bg-[#f1f5fb]" />
    <Header />
    <main className="mr-[195px] ml-[29px] flex min-h-0 flex-1 flex-col pt-[19px]">
      <div className="flex h-[51px] shrink-0 items-center rounded-[5px] border border-[#c9c9c9] pr-[2px]">
        <h1 className="flex-1 pb-[2px] pl-1 text-center font-['Liberation_Sans',Arial,sans-serif] text-[40px] leading-[46px] text-white">Consola De Informes Radiológicos</h1>
        <button type="button" aria-label="Contraer"><Stroke w={35} h={20} d="M1 19L17.5 2 34 19" color="#9b9ba6" width={3} /></button>
      </div>
      <Filters />
      <Summary />
      <section className="mt-[2px] min-h-0 flex-1 overflow-hidden rounded-t-[5px] border border-b-0 border-[#c9c9c9] pr-[6px] pl-[7px]">
        <Toolbar />
        <Studies />
      </section>
    </main>
    <footer className="flex h-[37px] shrink-0 items-start text-[11px] leading-[22px] font-bold text-white">
      <span className="mr-3 font-['Open_Sans',Tahoma,sans-serif] text-sm leading-[22px] font-normal">Recientes:</span>
      {RECENT.map((r, i) => (
        <span key={r} className="mr-1 flex">
          <a href="#" className={i === 3 ? 'text-[#1e90ff]' : undefined}>{r}</a>
          <span className="ml-[18px] text-sm leading-[22px] font-normal text-[#8c8c8c]">/</span>
        </span>
      ))}
    </footer>
  </div>
);

export default App;
